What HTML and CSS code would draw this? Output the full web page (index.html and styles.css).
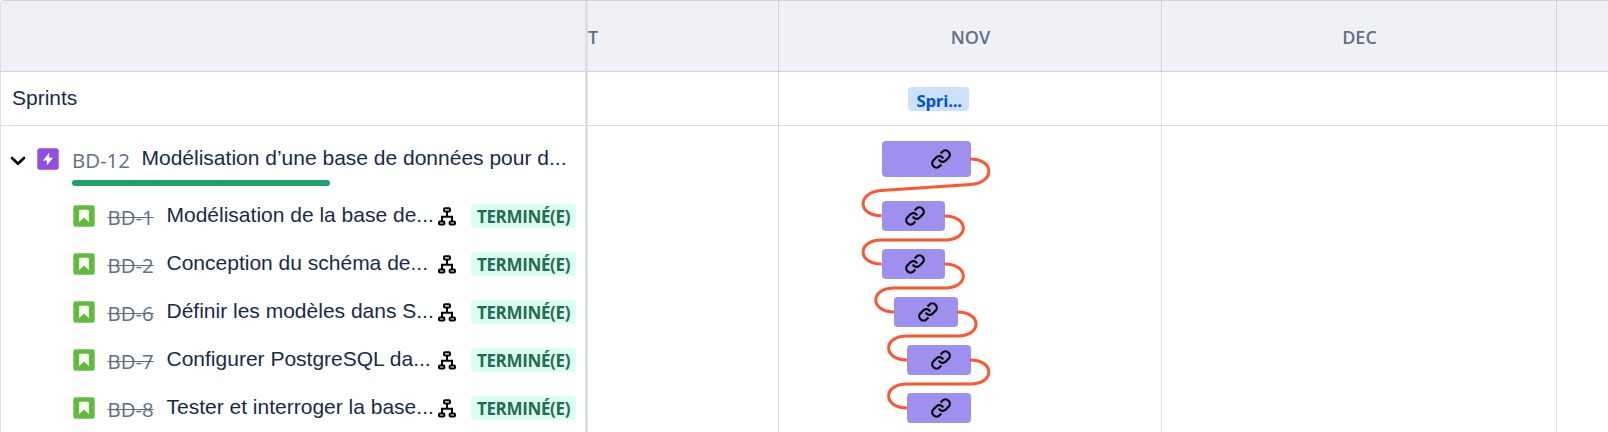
FILE: index.html
```html
<!DOCTYPE html>
<html lang="fr">
<head>
<meta charset="utf-8">
<title>Roadmap</title>
<link rel="stylesheet" href="styles.css">
</head>
<body>
<svg class="defs" width="0" height="0" aria-hidden="true">
  <symbol id="story" viewBox="0 0 22 22"><rect x=".3" y=".3" width="21.4" height="21.4" rx="2.6" fill="#63ba3c"/><path d="M6.2 5.6q0-.9.9-.9h7.8q.9 0 .9.9v11.6L11 12.4l-4.8 4.8z" fill="#fff"/></symbol>
  <symbol id="tree" viewBox="0 0 18 19"><g fill="none" stroke="#000" stroke-width="2"><rect x="6" y="1.2" width="6" height="3.3" rx="1"/><rect x="1" y="14.4" width="5.4" height="3.1" rx="1"/><rect x="11.6" y="14.4" width="5.4" height="3.1" rx="1"/><path d="M9 4.5v5M4 14.4v-4.6h10v4.6"/></g></symbol>
  <symbol id="link" viewBox="0 0 24 24"><g fill="none" stroke="#000" stroke-width="2.4" stroke-linecap="butt"><path d="M9.6 12.6a4.7 4.7 0 0 0 7.6 1.1l3-3a4.7 4.7 0 0 0-6.7-6.7l-2 2"/><path d="M14.4 11.4a4.7 4.7 0 0 0-7.6-1.1l-3 3a4.7 4.7 0 0 0 6.7 6.7l2-2"/></g></symbol>
</svg>
<main class="roadmap">
  <section class="panel">
    <header class="head"></header>
    <div class="sprints">Sprints</div>
    <div class="epic">
      <svg class="chevron" width="16" height="10" viewBox="0 0 16 10"><path d="M2 2l6 5.8L14 2" fill="none" stroke="#000" stroke-width="2.6" stroke-linecap="round" stroke-linejoin="round"/></svg>
      <svg class="epic-icon" width="22" height="22" viewBox="0 0 22 22"><rect x=".3" y=".3" width="21.4" height="21.4" rx="2.6" fill="#904ee2"/><path d="M12.2 4.8v4.9h3.9L9.9 17.4v-5H6z" fill="#fff"/></svg>
      <div class="epic-body">
        <div class="epic-line"><span class="key">BD-12</span><span class="title">Modélisation d’une base de données pour d...</span></div>
        <div class="progress"></div>
      </div>
    </div>
    <div class="issue"><svg class="story"><use href="#story"/></svg><span class="key done">BD-1</span><span class="title">Modélisation de la base de...</span><svg class="tree"><use href="#tree"/></svg><span class="status">TERMINÉ(E)</span></div>
    <div class="issue"><svg class="story"><use href="#story"/></svg><span class="key done">BD-2</span><span class="title">Conception du schéma de...</span><svg class="tree"><use href="#tree"/></svg><span class="status">TERMINÉ(E)</span></div>
    <div class="issue"><svg class="story"><use href="#story"/></svg><span class="key done">BD-6</span><span class="title">Définir les modèles dans S...</span><svg class="tree"><use href="#tree"/></svg><span class="status">TERMINÉ(E)</span></div>
    <div class="issue"><svg class="story"><use href="#story"/></svg><span class="key done">BD-7</span><span class="title">Configurer PostgreSQL da...</span><svg class="tree"><use href="#tree"/></svg><span class="status">TERMINÉ(E)</span></div>
    <div class="issue"><svg class="story"><use href="#story"/></svg><span class="key done">BD-8</span><span class="title">Tester et interroger la base...</span><svg class="tree"><use href="#tree"/></svg><span class="status">TERMINÉ(E)</span></div>
  </section>
  <section class="timeline">
    <header class="months"><div class="oct">T</div><div>NOV</div><div>DEC</div><div></div></header>
    <div class="sprint-track"><span class="sprint">Spri...</span></div>
    <div class="bars">
      <div class="bar-row first"><div class="bar" style="margin-left:293.5px;width:89px"><svg><use href="#link"/></svg></div></div>
      <div class="bar-row"><div class="bar" style="margin-left:293.5px;width:63.5px"><svg><use href="#link"/></svg></div></div>
      <div class="bar-row"><div class="bar" style="margin-left:293.5px;width:63.5px"><svg><use href="#link"/></svg></div></div>
      <div class="bar-row"><div class="bar" style="margin-left:306.2px;width:63.5px"><svg><use href="#link"/></svg></div></div>
      <div class="bar-row"><div class="bar" style="margin-left:319px;width:63.5px"><svg><use href="#link"/></svg></div></div>
      <div class="bar-row"><div class="bar" style="margin-left:319px;width:63.5px"><svg><use href="#link"/></svg></div></div>
    </div>
    <div class="grid"><i></i><i></i><i></i><i></i></div>
    <svg class="links" viewBox="588 0 1020 432" width="1020" height="432">
      <path d="M970 159C995 159 995 183 970.5 184.5L881.5 190.5C857 192 857 215.7 881.5 215.7"/>
      <path d="M944.5 216C969.5 216 969.5 240 945 240H881.5C857 240 857 264 881.5 264"/>
      <path d="M944.5 264C969.5 264 969.5 288 945 288H894.2C869.7 288 869.7 312 894.2 312"/>
      <path d="M957.2 312C982.2 312 982.2 336 957.7 336H907C882.5 336 882.5 360 907 360"/>
      <path d="M970 360C995 360 995 384 970.5 384H907C882.5 384 882.5 408 907 408"/>
    </svg>
  </section>
</main>
</body>
</html>
```
FILE: styles.css
```css
* { box-sizing: border-box; }
body { margin: 0; background: #fff; overflow: hidden; }
.defs { position: absolute; }
.roadmap {
  display: flex;
  width: 1608px;
  height: 432px;
  overflow: hidden;
  border-top: 1px solid #cfd4db;
  border-left: 1px solid #dcdfe4;
  border-top-left-radius: 4px;
  font-family: "Open Sans", "Noto Sans", sans-serif;
  color: #172b4d;
}
.panel { width: 587px; flex: none; border-right: 3px solid #dcdfe4; }
.head, .months { height: 71px; background: #f0f1f4; border-bottom: 1px solid #cfd2d8; }
.sprints, .sprint-track { height: 54px; border-bottom: 1px solid #dadce0; }
.sprints { padding-left: 11px; font: 21px/52px "Liberation Sans", sans-serif; }
.title { font: 21px/22px "Liberation Sans", sans-serif; white-space: nowrap; }
.key { font-size: 20.4px; line-height: 24px; color: #626f86; white-space: nowrap; }
.epic { display: flex; height: 66px; padding: 21px 0 0 9px; }
.chevron { margin-top: 9px; }
.epic-icon { margin: 1px 0 0 11px; }
.epic-body { margin-left: 13px; }
.epic-line { display: flex; height: 33px; }
.epic-line .key { width: 69.5px; padding-top: 1px; }
.progress { width: 258px; height: 6px; border-radius: 3px; background: #22a06b; }
.issue { display: flex; height: 48px; padding: 12px 0 0 72px; }
.issue svg { flex: none; }
.story { width: 22px; height: 22px; margin: 1px 12.5px 0 0; }
.issue .key { width: 59px; padding-top: 1px; }
.done { text-decoration: line-through; text-decoration-thickness: 1px; }
.issue .title { width: 271.5px; }
.tree { width: 18px; height: 19px; margin-top: 3px; }
.status { width: 105px; height: 24px; margin-left: 15px; border-radius: 4px; background: #dcfff1; color: #216e4e; font-size: 17px; font-weight: 700; line-height: 26px; text-align: center; letter-spacing: -.35px; }
.timeline { position: relative; flex: 1; min-width: 0; }
.months, .grid { display: grid; grid-template-columns: 191px 383px 395px 1fr; }
.months { font-size: 18px; font-weight: 600; line-height: 73px; text-align: center; color: #626f86; }
.oct { padding-left: 0; text-align: left; }
.sprint-track { padding: 15px 0 0 320.4px; }
.sprint { display: block; width: 60.5px; height: 24px; padding-left: 8px; border-radius: 4px; background: #cce0ff; color: #0055cc; font-size: 16.8px; font-weight: 700; line-height: 27px; letter-spacing: -.2px; overflow: hidden; }
.bar-row { height: 48px; padding-top: 9px; }
.bar-row.first { height: 66px; padding-top: 15px; }
.bar { display: flex; align-items: center; justify-content: flex-end; height: 30px; padding-right: 19px; border-radius: 4px; background: #9f8fef; }
.first .bar { height: 36px; }
.bar svg { width: 22px; height: 22px; }
.grid, .links { position: absolute; top: -1px; left: 0; }
.grid { width: 100%; height: 432px; }
.grid i { border-right: 1px solid rgba(9, 30, 66, .14); }
.grid i:last-child { border: 0; }
.links { fill: none; stroke: #ff5630; stroke-width: 3; }
```
